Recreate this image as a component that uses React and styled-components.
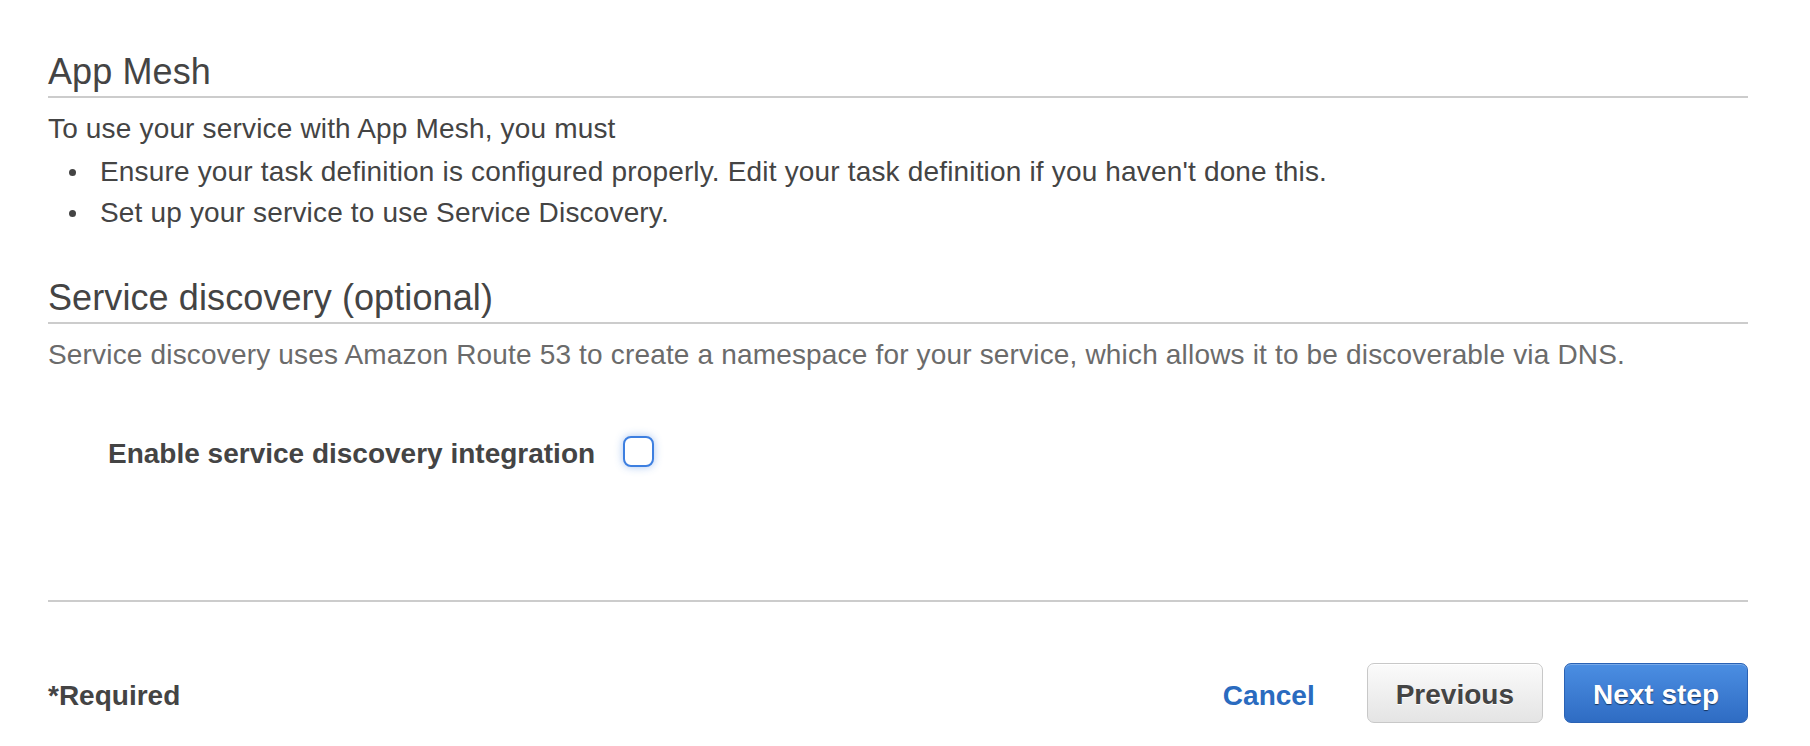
import React, { useState } from "react";
import styled, { createGlobalStyle } from "styled-components";

const GlobalStyle = createGlobalStyle`
	html, body {
		margin: 0;
		padding: 0;
		background: #ffffff;
	}
	body {
		font-family: "Liberation Sans", Arial, Helvetica, sans-serif;
		color: #444444;
		-webkit-font-smoothing: antialiased;
	}
`;

const Page = styled.div`
	padding: 52px 62px 0 48px;
`;

const SectionTitle = styled.h2`
	margin: ${(props) => (props.$first ? "0" : "45px 0 0")};
	padding-bottom: 4px;
	border-bottom: 2px solid #cccccc;
	font-size: 36px;
	line-height: 40px;
	font-weight: 400;
	letter-spacing: 0.1px;
	color: #444444;
`;

const Text = styled.p`
	margin: ${(props) => props.$margin || "10px 0 0"};
	font-size: 28px;
	line-height: 41px;
	letter-spacing: 0.17px;
	color: ${(props) => (props.$muted ? "#6b6b6b" : "#444444")};
`;

const BulletList = styled.ul`
	margin: 2px 0 0;
	padding: 0;
	list-style: none;
`;

const Bullet = styled.li`
	display: flex;
	font-size: 28px;
	line-height: 41px;
	letter-spacing: 0.17px;
	color: #444444;

	&::before {
		content: "";
		flex-shrink: 0;
		width: 7px;
		height: 7px;
		margin: 18px 24px 0 21px;
		border-radius: 50%;
		background: #444444;
	}
`;

const ToggleRow = styled.label`
	display: flex;
	align-items: flex-start;
	gap: 28px;
	margin-top: 59px;
	padding-left: 60px;
	cursor: pointer;
`;

const ToggleLabel = styled.span`
	font-size: 28px;
	line-height: 40px;
	font-weight: 700;
	color: #444444;
`;

const CheckBox = styled.span`
	box-sizing: border-box;
	width: 31px;
	height: 31px;
	margin-top: 2px;
	border: 2px solid #3d7fe0;
	border-radius: 8px;
	background: ${(props) => (props.$checked ? "#3d7fe0" : "#ffffff")};
	box-shadow: 0 0 8px rgba(61, 127, 224, 0.45);
	display: flex;
	align-items: center;
	justify-content: center;
	color: #ffffff;
	font-size: 20px;
	font-weight: 700;
`;

const Footer = styled.div`
	display: flex;
	align-items: center;
	justify-content: space-between;
	margin-top: 126px;
	padding-top: 61px;
	border-top: 2px solid #cccccc;
`;

const Required = styled.span`
	padding-top: 5px;
	font-size: 28px;
	font-weight: 700;
	color: #444444;
`;

const Actions = styled.div`
	display: flex;
	align-items: center;
	gap: 21px;
`;

const LinkButton = styled.a`
	margin-right: 31px;
	padding-top: 5px;
	font-size: 28px;
	font-weight: 700;
	color: #2a6bbf;
	text-decoration: none;
	cursor: pointer;
`;

const Button = styled.button`
	box-sizing: border-box;
	height: 60px;
	padding: 4px 28px 0;
	border-radius: 7px;
	font-family: "Liberation Sans", Arial, Helvetica, sans-serif;
	font-size: 28px;
	font-weight: 700;
	cursor: pointer;
	border: 1px solid ${(props) => (props.$primary ? "#2a62b4" : "#c8c8c8")};
	background: ${(props) =>
		props.$primary
			? "linear-gradient(#4b8ee2, #2f6cc3)"
			: "linear-gradient(#fbfbfb, #e4e4e4)"};
	color: ${(props) => (props.$primary ? "#ffffff" : "#444444")};
	text-shadow: ${(props) =>
		props.$primary ? "0 1px 1px rgba(0, 0, 0, 0.55)" : "0 1px 0 #ffffff"};
	box-shadow: ${(props) =>
		props.$primary
			? "inset 0 1px 0 rgba(255, 255, 255, 0.25)"
			: "inset 0 1px 0 #ffffff"};
`;

const App = () => {
	const [enabled, setEnabled] = useState(false);

	return (
		<>
			<GlobalStyle />
			<Page>
				<SectionTitle $first>App Mesh</SectionTitle>
				<Text>To use your service with App Mesh, you must</Text>
				<BulletList>
					<Bullet>
						Ensure your task definition is configured properly. Edit your task
						definition if you haven't done this.
					</Bullet>
					<Bullet>Set up your service to use Service Discovery.</Bullet>
				</BulletList>

				<SectionTitle>Service discovery (optional)</SectionTitle>
				<Text $muted $margin="10px 0 0">
					Service discovery uses Amazon Route 53 to create a namespace for your
					service, which allows it to be discoverable via DNS.
				</Text>

				<ToggleRow onClick={() => setEnabled(!enabled)}>
					<ToggleLabel>Enable service discovery integration</ToggleLabel>
					<CheckBox $checked={enabled}>{enabled ? "✓" : ""}</CheckBox>
				</ToggleRow>

				<Footer>
					<Required>*Required</Required>
					<Actions>
						<LinkButton>Cancel</LinkButton>
						<Button>Previous</Button>
						<Button $primary>Next step</Button>
					</Actions>
				</Footer>
			</Page>
		</>
	);
};

export default App;
